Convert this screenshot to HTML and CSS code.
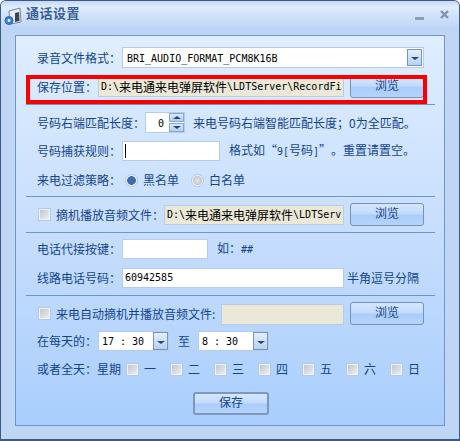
FILE: index.html
```html
<!DOCTYPE html>
<html lang="zh">
<head>
<meta charset="utf-8">
<title>通话设置</title>
<link rel="stylesheet" href="styles.css">
</head>
<body>
<div class="window">
  <div class="titlebar">
    <svg class="app-icon" width="18" height="20" viewBox="0 0 18 20">
      <path d="M5 4 L16 1 L17 15 L6 17 Z" fill="#e6edf6" stroke="#6f88aa"/>
      <path d="M11 6 L15 5 L15.500 14 L11 15 Z" fill="#3d444f"/>
      <circle cx="5" cy="13.500" r="4" fill="#3f7fd6" stroke="#2f62ad"/>
      <circle cx="5" cy="13.500" r="1.400" fill="#e8f2ff"/>
    </svg>
    <span class="title">通话设置</span>
    <svg class="win-min" width="9" height="3" viewBox="0 0 9 3"><rect width="9" height="3" fill="#8a9db5"/></svg>
    <svg class="win-close" width="9" height="9" viewBox="0 0 9 9"><path d="M1 1 L8 8 M8 1 L1 8" stroke="#7f93ad" stroke-width="2.400"/></svg>
  </div>
  <div class="panel">
    <div class="row h21">
      <span class="label w85">录音文件格式<span class="cn">：</span></span>
      <div class="select">
        <span class="value"><span class="lat">BRI_AUDIO_FORMAT_PCM8K16B</span></span>
        <span class="drop"><i class="arrow"></i></span>
      </div>
    </div>
    <div class="row h23 mt7">
      <span class="label w61">保存位置<span class="cn">：</span></span>
      <div class="path w246"><span class="lat">D:\</span>来电通来电弹屏软件<span class="lat">\LDTServer\RecordFi</span></div>
      <button class="btn ml6">浏览</button>
    </div>
    <div class="sep mt6"></div>
    <div class="row h21 mt7">
      <span class="label w108">号码右端匹配长度<span class="cn">：</span></span>
      <div class="spin">
        <span class="spin-val"><span class="lat">0</span></span>
        <span class="spin-btns"><i class="up"></i><i class="down"></i></span>
      </div>
      <span class="label ml8">来电号码右端智能匹配长度；0为全匹配。</span>
    </div>
    <div class="row h20 mt8">
      <span class="label w85">号码捕获规则<span class="cn">：</span></span>
      <div class="input w98"><i class="caret"></i></div>
      <span class="label ml9">格式如“<span class="lat">9[</span>号码<span class="lat">]</span>”。重置请置空。</span>
    </div>
    <div class="row h20 mt9">
      <span class="label w88">来电过滤策略<span class="cn">：</span></span>
      <i class="radio on"></i>
      <span class="label ml5 w48">黑名单</span>
      <i class="radio"></i>
      <span class="label ml5">白名单</span>
    </div>
    <div class="sep mt6"></div>
    <div class="row h23 mt6">
      <i class="check ml1"></i>
      <span class="label ml5 w108">摘机播放音频文件<span class="cn">：</span></span>
      <div class="path w180"><span class="lat">D:\</span>来电通来电弹屏软件<span class="lat">\LDTServ</span></div>
      <button class="btn ml6">浏览</button>
    </div>
    <div class="sep mt6"></div>
    <div class="row h20 mt6">
      <span class="label w85">电话代接按键<span class="cn">：</span></span>
      <div class="input w86"></div>
      <span class="label ml9">如<span class="cn">：</span><span class="lat">##</span></span>
    </div>
    <div class="row h20 mt9">
      <span class="label w85">线路电话号码<span class="cn">：</span></span>
      <div class="input w222"><span class="lat">60942585</span></div>
      <span class="label ml3">半角逗号分隔</span>
    </div>
    <div class="sep mt7"></div>
    <div class="row h23 mt6">
      <i class="check ml1"></i>
      <span class="label ml5 w165">来电自动摘机并播放音频文件:</span>
      <div class="path w123"></div>
      <button class="btn ml6">浏览</button>
    </div>
    <div class="row h20 mt6">
      <span class="label w61">在每天的<span class="cn">：</span></span>
      <div class="time"><span class="time-val"><span class="lat">17 : 30</span></span><span class="drop"><i class="arrow"></i></span></div>
      <span class="label ml9 w20">至</span>
      <div class="time"><span class="time-val"><span class="lat">8 : 30</span></span><span class="drop"><i class="arrow"></i></span></div>
    </div>
    <div class="row h20 mt8">
      <span class="label">或者全天<span class="cn">：</span>星期</span>
      <div class="days">
        <label class="day"><i class="check"></i><span class="label">一</span></label>
        <label class="day"><i class="check"></i><span class="label">二</span></label>
        <label class="day"><i class="check"></i><span class="label">三</span></label>
        <label class="day"><i class="check"></i><span class="label">四</span></label>
        <label class="day"><i class="check"></i><span class="label">五</span></label>
        <label class="day"><i class="check"></i><span class="label">六</span></label>
        <label class="day"><i class="check"></i><span class="label">日</span></label>
      </div>
    </div>
    <div class="save-row">
      <button class="btn save">保存</button>
    </div>
    <div class="highlight"></div>
  </div>
</div>
</body>
</html>
```
FILE: styles.css
```css
* { box-sizing: border-box; }
html, body { margin: 0; padding: 0; overflow: hidden; }
body {
  width: 460px;
  height: 441px;
  background: #fff;
  font-family: "Noto Sans CJK SC", "Liberation Sans", sans-serif;
  font-size: 12px;
  line-height: 14px;
  color: #144490;
  text-spacing-trim: space-all;
}
.window {
  width: 460px;
  height: 441px;
  background: #bfd6f5;
  border: 1px solid #3c5a84;
  border-bottom-width: 2px;
  border-radius: 6px 6px 0 0;
  padding: 0 15px 0 14px;
  display: flex;
  flex-direction: column;
}
.titlebar {
  height: 34px;
  flex: none;
  margin: 0 -15px 0 -14px;
  padding: 0 10px 6px 3px;
  display: flex;
  align-items: center;
  background: linear-gradient(#c3d8f3 0, #dfecfc 6px, #bdd5f5 27px, #bfd6f5 100%);
  border-radius: 5px 5px 0 0;
}
.app-icon { flex: none; margin-top: 3px; }
.title {
  margin: -4px 0 0 4px;
  font-size: 13px;
  font-weight: 700;
  letter-spacing: 0.5px;
  color: #3b6096;
  flex: 1;
}
.win-min { margin: 7px 16px 0 0; }
.win-close { margin-top: -2px; }
.panel {
  position: relative;
  width: 430px;
  height: 391px;
  flex: none;
  border: 1px solid #6b96d2;
  background: linear-gradient(#dfeeff 0, #c7defd 50%, #a9cefd 100%);
  padding: 11px 9px 0 10px;
}
.row { display: flex; align-items: center; padding-left: 11px; }
.h20 { height: 20px; }
.h21 { height: 21px; }
.h23 { height: 23px; }
.mt6 { margin-top: 6px; }
.mt7 { margin-top: 7px; }
.mt8 { margin-top: 8px; }
.mt9 { margin-top: 9px; }
.ml1 { margin-left: 1px; }
.ml3 { margin-left: 3px; }
.ml5 { margin-left: 5px; }
.ml6 { margin-left: 6px; }
.ml8 { margin-left: 8px; }
.ml9 { margin-left: 9px; }
.w20 { width: 20px; }
.w48 { width: 48px; }
.w61 { width: 61px; }
.w85 { width: 85px; }
.w86 { width: 86px; }
.w88 { width: 88px; }
.w98 { width: 98px; }
.w108 { width: 108px; }
.w123 { width: 123px; }
.w165 { width: 165px; }
.w180 { width: 180px; }
.w222 { width: 222px; }
.w246 { width: 246px; }
.label { flex: none; white-space: nowrap; }
.cn { font-family: "Noto Sans CJK TC", sans-serif; }
.lat { font-family: "DejaVu Sans Mono", "Liberation Mono", monospace; font-size: 10px; }
.sep { height: 1px; background: #6b96d2; }

.select {
  width: 302px;
  height: 21px;
  background: #fff;
  border: 1px solid #b5cdeb;
  display: flex;
  align-items: center;
  justify-content: space-between;
  padding: 0 1px 0 4px;
  color: #000;
  flex: none;
}
.drop {
  width: 15px;
  height: 17px;
  flex: none;
  display: flex;
  align-items: center;
  justify-content: center;
  border: 1px solid #7594bd;
  background: linear-gradient(#e4eefb, #b9d1f1);
}
.arrow {
  width: 0;
  height: 0;
  margin-top: 2px;
  border: 3px solid transparent;
  border-top: 3px solid #1d4585;
  border-bottom: 0;
  border-left-width: 4px;
  border-right-width: 4px;
}
.path {
  height: 20px;
  flex: none;
  background: #ebe8d8;
  border: 1px solid #b5cdeb;
  color: #000;
  padding: 0 1px 0 2px;
  display: flex;
  align-items: center;
  overflow: hidden;
  white-space: nowrap;
  margin-top: 1px;
}
.w123.path { margin-top: 2px; height: 21px; }
.btn {
  width: 74px;
  height: 23px;
  flex: none;
  padding: 0;
  font: inherit;
  color: #144490;
  border: 1px solid #7791b8;
  border-radius: 3px;
  background: linear-gradient(#d5e6fd 0, #c4dcfb 45%, #a9cdfc 55%, #b6d4fc 100%);
  display: flex;
  align-items: center;
  justify-content: center;
  padding-bottom: 4px;
}
.spin {
  width: 40px;
  height: 21px;
  flex: none;
  background: #fff;
  border: 1px solid #b5cdeb;
  display: flex;
  align-items: center;
  color: #000;
}
.spin-val { flex: 1; text-align: right; padding-right: 5px; }
.spin-btns { width: 15px; height: 19px; display: flex; flex-direction: column; gap: 1px; }
.up, .down {
  flex: 1;
  border: 1px solid #8aa6cc;
  background: linear-gradient(#dde9f9, #b4cdef);
  display: flex;
  align-items: center;
  justify-content: center;
}
.up::after, .down::after {
  content: "";
  border: 3px solid transparent;
  border-left-width: 4px;
  border-right-width: 4px;
}
.up::after { border-top: 0; border-bottom-color: #1d4585; }
.down::after { border-bottom: 0; border-top-color: #1d4585; }
.input {
  height: 20px;
  flex: none;
  background: #fff;
  border: 1px solid #b5cdeb;
  padding: 0 2px;
  color: #000;
  display: flex;
  align-items: center;
}
.caret { width: 1px; height: 14px; background: #000; }
.radio {
  width: 13px;
  height: 13px;
  flex: none;
  border-radius: 50%;
  border: 1px solid #b3c9e8;
  background: radial-gradient(circle, #e6e6e6 0, #c4c8ce 55%, #eef3fa 62%, #eef3fa 100%);
}
.radio.on { background: radial-gradient(circle, #3f6ca8 0, #3f6ca8 52%, #eef3fa 60%, #eef3fa 100%); }
.check {
  width: 13px;
  height: 13px;
  flex: none;
  display: block;
  border: 1px solid #b3c9e8;
  outline: 1px solid #eef5ff;
  outline-offset: -2px;
  background: linear-gradient(135deg, #bcc1c9, #f2f3f5);
}
.days { display: flex; margin-left: 5px; }
.day { width: 44px; flex: none; display: flex; align-items: center; gap: 5px; }
.time {
  width: 71px;
  height: 20px;
  flex: none;
  background: #fff;
  border: 1px solid #b5cdeb;
  display: flex;
  align-items: center;
  justify-content: space-between;
  color: #000;
  padding: 0 0 0 3px;
}
.time .drop { height: 18px; }
.save-row { margin-top: 13px; padding-left: 167px; }
.btn.save { width: 76px; border: 2px solid #7d97bd; }
.highlight {
  position: absolute;
  left: 10px;
  top: 39px;
  width: 401px;
  height: 29px;
  border: 4px solid #fb0000;
  pointer-events: none;
}
```
